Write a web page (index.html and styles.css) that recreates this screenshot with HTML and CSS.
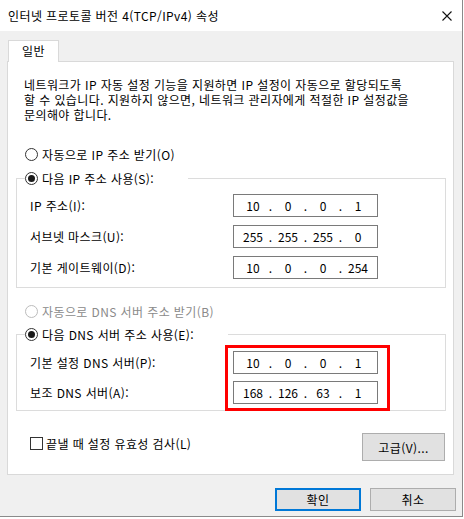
FILE: index.html
```html
<!DOCTYPE html>
<html lang="ko">
<head>
<meta charset="utf-8">
<title>인터넷 프로토콜 버전 4(TCP/IPv4) 속성</title>
<link rel="stylesheet" href="styles.css">
</head>
<body>
<div class="window">
  <div class="titlebar">
    <span class="title">인터넷 프로토콜 버전 4(TCP/IPv4) 속성</span>
    <svg class="close" width="10" height="10" viewBox="0 0 10 10"><path d="M0.5 0.5 L9.5 9.5 M9.5 0.5 L0.5 9.5" stroke="#111" stroke-width="1.1" fill="none"/></svg>
  </div>
  <div class="content">
    <div class="tabs"><div class="tab">일반</div></div>
    <div class="panel">
      <p class="desc">네트워크가 IP 자동 설정 기능을 지원하면 IP 설정이 자동으로 할당되도록<br>할 수 있습니다. 지원하지 않으면, 네트워크 관리자에게 적절한 IP 설정값을<br>문의해야 합니다.</p>
      <div class="radio radio-auto-ip"><span class="rb"></span>자동으로 IP 주소 받기(O)</div>
      <fieldset class="group ip-group">
        <legend class="radio legend"><span class="rb on"></span>다음 IP 주소 사용(S):</legend>
        <div class="rows">
          <div class="row"><span class="lbl">IP 주소(I):</span><div class="ipbox"><span class="oct">10</span><span class="dot">.</span><span class="oct">0</span><span class="dot">.</span><span class="oct">0</span><span class="dot">.</span><span class="oct">1</span></div></div>
          <div class="row"><span class="lbl">서브넷 마스크(U):</span><div class="ipbox"><span class="oct">255</span><span class="dot">.</span><span class="oct">255</span><span class="dot">.</span><span class="oct">255</span><span class="dot">.</span><span class="oct">0</span></div></div>
          <div class="row"><span class="lbl">기본 게이트웨이(D):</span><div class="ipbox"><span class="oct">10</span><span class="dot">.</span><span class="oct">0</span><span class="dot">.</span><span class="oct">0</span><span class="dot">.</span><span class="oct">254</span></div></div>
        </div>
      </fieldset>
      <div class="radio radio-auto-dns disabled"><span class="rb"></span>자동으로 DNS 서버 주소 받기(B)</div>
      <fieldset class="group dns-group">
        <legend class="radio legend"><span class="rb on"></span>다음 DNS 서버 주소 사용(E):</legend>
        <div class="rows dns-rows">
          <div class="row"><span class="lbl">기본 설정 DNS 서버(P):</span><div class="ipbox"><span class="oct">10</span><span class="dot">.</span><span class="oct">0</span><span class="dot">.</span><span class="oct">0</span><span class="dot">.</span><span class="oct">1</span></div></div>
          <div class="row"><span class="lbl">보조 DNS 서버(A):</span><div class="ipbox"><span class="oct">168</span><span class="dot">.</span><span class="oct">126</span><span class="dot">.</span><span class="oct">63</span><span class="dot">.</span><span class="oct">1</span></div></div>
          <div class="highlight"></div>
        </div>
      </fieldset>
      <div class="bottom-row">
        <div class="check"><span class="cb"></span>끝낼 때 설정 유효성 검사(L)</div>
        <div class="btn adv">고급(V)...</div>
      </div>
    </div>
    <div class="buttons">
      <div class="btn ok">확인</div>
      <div class="btn cancel">취소</div>
    </div>
  </div>
</div>
</body>
</html>
```

FILE: styles.css
```css
* { box-sizing: border-box; }
html, body { margin: 0; padding: 0; background: #ffffff; }
body {
  font-family: "Noto Sans CJK KR", "Noto Sans", sans-serif;
  font-size: 12px;
  letter-spacing: 0.4px;
  color: #000;
}
.window {
  width: 463px;
  height: 517px;
  border-right: 1px solid #8a8a8a;
  border-bottom: 1px solid #8a8a8a;
  background: #f0f0f0;
  display: flex;
  flex-direction: column;
}
.titlebar {
  height: 31px;
  background: #fff;
  display: flex;
  align-items: center;
  justify-content: space-between;
  padding: 0 10px 0 8px;
  line-height: 16px;
}
.title { font-size: 12px; }
.close { display: block; margin-top: 1px; }
.content {
  padding: 9px 0 0 0;
}
.tabs { display: flex; padding-left: 8px; }
.tab {
  position: relative;
  z-index: 1;
  width: 51px;
  height: 22px;
  margin-bottom: -1px;
  background: #fff;
  border: 1px solid #d9d9d9;
  border-bottom: none;
  text-align: center;
  line-height: 20px;
}
.panel {
  margin-left: 7px;
  width: 447px;
  background: #fff;
  border: 1px solid #d9d9d9;
  padding: 0 0 13px 0;
}
.desc {
  margin: 15px 0 0 16px;
  line-height: 15px;
}
.radio {
  display: flex;
  align-items: center;
  line-height: 15px;
  height: 15px;
}
.rb {
  width: 13px;
  height: 13px;
  border: 1px solid #333;
  border-radius: 50%;
  background: #fff;
  margin-right: 4px;
  flex: none;
  position: relative;
}
.rb.on::after {
  content: "";
  position: absolute;
  left: 2px; top: 2px;
  width: 7px; height: 7px;
  border-radius: 50%;
  background: #1a1a1a;
}
.disabled { color: #8a8a8a; }
.disabled .rb { border-color: #bcbcbc; }
.radio-auto-ip { margin: 25px 0 0 17px; }
.radio-auto-dns { margin: 16px 0 0 17px; }
.group {
  margin: 9px 7px 0 8px;
  border: 1px solid #dcdcdc;
  padding: 8px 67px 8px 0;
  min-width: 0;
}
.dns-group { margin-top: 8px; padding-top: 9px; padding-bottom: 6px; }
.legend {
  margin-left: 8px;
  padding: 0 34px 0 0;
}
.rows {
  margin-left: 13px;
  display: flex;
  flex-direction: column;
  gap: 8px;
}
.dns-rows { gap: 7px; position: relative; }
.row {
  display: flex;
  align-items: center;
  justify-content: space-between;
}
.ipbox {
  width: 145px;
  height: 23px;
  border: 1px solid #7a7a7a;
  background: #fff;
  display: flex;
  align-items: center;
  padding-left: 5px;
  line-height: 15px;
  letter-spacing: 0;
}
.oct { width: 28px; text-align: center; }
.dot { width: 7px; text-align: center; }
.highlight {
  position: absolute;
  left: 195px;
  top: -6px;
  width: 165px;
  height: 66px;
  border: 3px solid #ff0000;
}
.bottom-row {
  display: flex;
  justify-content: space-between;
  align-items: flex-start;
  margin: 22px 8px 0 22px;
}
.check {
  display: flex;
  align-items: center;
  margin-top: 3px;
  line-height: 15px;
}
.cb {
  width: 13px;
  height: 13px;
  border: 1px solid #333;
  background: #fff;
  margin-right: 3px;
}
.btn {
  background: #e1e1e1;
  border: 1px solid #adadad;
  display: flex;
  align-items: center;
  justify-content: center;
  line-height: 15px;
}
.adv { width: 83px; height: 28px; }
.buttons {
  display: flex;
  justify-content: flex-end;
  gap: 9px;
  padding-right: 6px;
  margin-top: 13px;
}
.ok, .cancel { width: 86px; height: 23px; }
.ok { border: 2px solid #0078d7; }
```
